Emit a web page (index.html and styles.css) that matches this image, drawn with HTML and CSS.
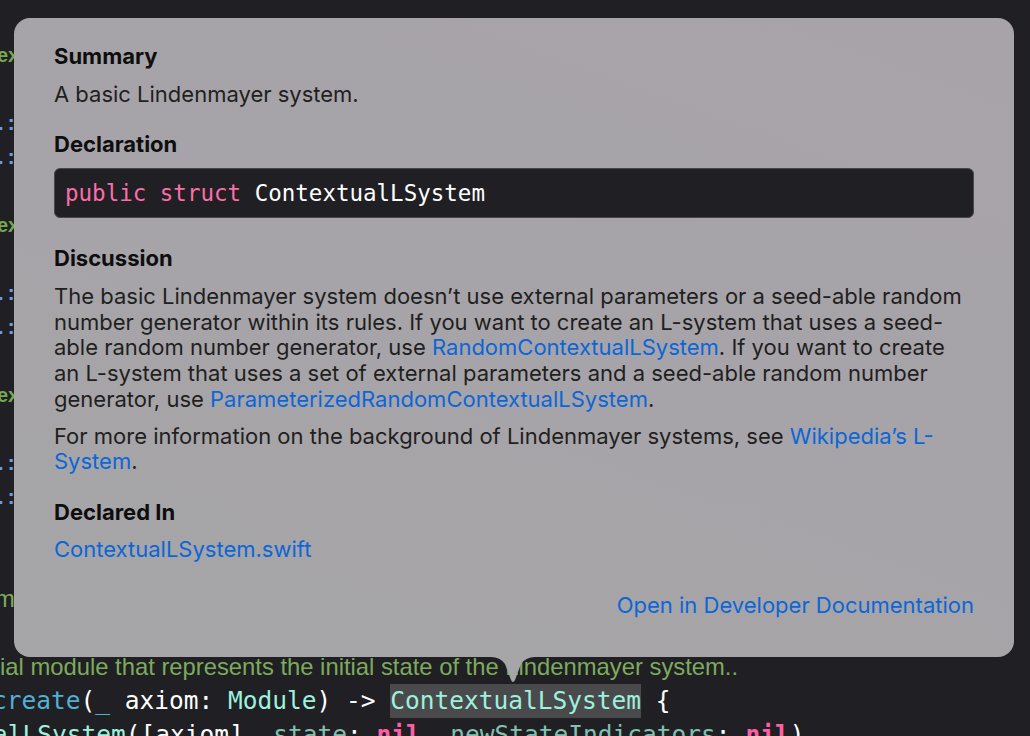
FILE: index.html
```html
<!DOCTYPE html>
<html lang="en">
<head>
<meta charset="utf-8">
<title>Quick Help</title>
<link rel="stylesheet" href="styles.css">
</head>
<body>
<div class="editor">
  <div class="row"></div>
  <div class="row"><span class="doc-bold shift-ex">ex</span></div>
  <div class="row"></div>
  <div class="row"><span class="blue-dot">.</span><span class="blue-colon">:</span></div>
  <div class="row"><span class="blue-dot">.</span><span class="blue-colon">:</span></div>
  <div class="row"></div>
  <div class="row"><span class="doc-bold shift-ex">ex</span></div>
  <div class="row"></div>
  <div class="row"><span class="blue-dot">.</span><span class="blue-colon">:</span></div>
  <div class="row"><span class="blue-dot">.</span><span class="blue-colon">:</span></div>
  <div class="row"></div>
  <div class="row"><span class="doc-bold shift-ex">ex</span></div>
  <div class="row"></div>
  <div class="row"><span class="blue-dot">.</span><span class="blue-colon">:</span></div>
  <div class="row"><span class="blue-dot">.</span><span class="blue-colon">:</span></div>
  <div class="row"></div>
  <div class="row"></div>
  <div class="row"><span class="comment shift-m">m</span></div>
  <div class="row"></div>
  <div class="row"><span class="comment">ial module that represents the initial state of the Lindenmayer system..</span></div>
  <div class="row code shift-create"><span class="fn">create</span>(<span class="fn">_</span> axiom: <span class="type">Module</span>) -&gt; <span class="type sel">ContextualLSystem</span> {</div>
  <div class="row code shift-third"><span class="type">alLSystem</span>([axiom], <span class="label">state</span>: <span class="kw">nil</span>, <span class="label">newStateIndicators</span>: <span class="kw">nil</span>)</div>
</div>

<div class="popover">
  <section class="sec sec-summary">
    <h2 class="title">Summary</h2>
    <p class="text">A basic Lindenmayer system.</p>
  </section>
  <section class="sec sec-decl">
    <h2 class="title">Declaration</h2>
    <div class="decl"><span class="decl-code"><span class="kw-decl">public</span> <span class="kw-decl">struct</span> ContextualLSystem</span></div>
  </section>
  <section class="sec sec-disc">
    <h2 class="title">Discussion</h2>
    <p class="text para">The basic Lindenmayer system doesn’t use external parameters or a seed-able random<br>number generator within its rules. If you want to create an L-system that uses a seed-<br>able random number generator, use <a class="link" href="#">RandomContextualLSystem</a>. If you want to create<br>an L-system that uses a set of external parameters and a seed-able random number<br>generator, use <a class="link" href="#">ParameterizedRandomContextualLSystem</a>.</p>
    <p class="text para para2">For more information on the background of Lindenmayer systems, see <a class="link" href="#">Wikipedia’s L-<br>System</a>.</p>
  </section>
  <section class="sec sec-declin">
    <h2 class="title">Declared In</h2>
    <p class="text"><a class="link" href="#">ContextualLSystem.swift</a></p>
  </section>
  <div class="footer"><a class="link" href="#">Open in Developer Documentation</a></div>
  <svg class="arrow" width="44" height="27" viewBox="0 0 44 27"><path d="M0 0 Q9 0 14 7 L20 23 Q22 27 24 23 L30 7 Q35 0 44 0 Z" fill="#a6a5a7"/></svg>
</div>
</body>
</html>
```

FILE: styles.css
```css
* { box-sizing: border-box; }
html, body { margin: 0; padding: 0; }
body {
  width: 1030px;
  height: 736px;
  overflow: hidden;
  background: #1f1f24;
  position: relative;
  font-family: Inter, "Noto Sans", sans-serif;
}

/* editor background */
.editor {
  padding-top: 4px;
  display: flex;
  flex-direction: column;
}
.row {
  height: 34px;
  line-height: 34px;
  white-space: nowrap;
  font-family: "Liberation Sans", Arial, sans-serif;
  font-size: 21px;
  color: #dfdfe0;
}
.doc-bold { color: #74a952; font-weight: bold; font-size: 20px; }
.shift-ex { margin-left: -3px; }
.blue-dot { color: #6b9be0; font-size: 20px; margin-left: -2px; font-weight: bold; }
.blue-colon { color: #6b9be0; font-size: 22px; margin-left: 4px; font-weight: bold; }
.comment { color: #7dab5c; font-size: 23.8px; }
.shift-m { margin-left: -5px; }
.code {
  font-family: "DejaVu Sans Mono", "Liberation Mono", monospace;
  font-size: 24.5px;
  color: #ffffff;
}
.shift-create { margin-left: -8px; }
.shift-third { margin-left: -7px; }
.fn { color: #4fb1d4; }
.type { color: #9ef1dd; }
.label { color: #83c0b0; }
.kw { color: #fc5fa3; font-weight: bold; }
.sel { background: #4a4a4d; display: inline-block; height: 34px; }

/* popover */
.popover {
  position: absolute;
  left: 14px;
  top: 18px;
  width: 1000px;
  height: 639px;
  border-radius: 16px;
  background: linear-gradient(200deg, #a8a3a9 0%, #a6a4a8 50%, #a6a5a7 100%);
  padding: 25px 40px 0 40px;
  display: flex;
  flex-direction: column;
  color: #1c1c1e;
}
.arrow {
  position: absolute;
  left: 477px;
  top: 639px;
}
.sec { display: flex; flex-direction: column; }
.title {
  margin: 0;
  font-size: 22px;
  line-height: 26px;
  font-weight: 700;
  color: #0e0e0f;
}
.text {
  margin: 0;
  font-size: 22px;
  line-height: 25.75px;
  color: #1f1f21;
  white-space: nowrap;
}
.sec-summary .text { margin-top: 13px; }
.sec-decl { margin-top: 23px; }
.decl {
  margin-top: 11px;
  height: 50px;
  background: #1f1f24;
  border: 1px solid #47474b;
  border-radius: 6px;
  padding: 0 10px;
  display: flex;
  align-items: center;
}
.decl-code {
  font-family: "DejaVu Sans Mono", "Liberation Mono", monospace;
  font-size: 22.5px;
  color: #ffffff;
  white-space: pre;
}
.kw-decl { color: #fc6ea8; }
.sec-disc { margin-top: 27px; }
.para { margin-top: 13px; }
.para2 { margin-top: 11px; }
.sec-declin { margin-top: 24px; }
.sec-declin .text { margin-top: 12px; }
.footer {
  margin-top: 29px;
  display: flex;
  justify-content: flex-end;
  font-size: 22px;
  line-height: 26px;
}
.link { color: #0b66d8; text-decoration: none; }
```
